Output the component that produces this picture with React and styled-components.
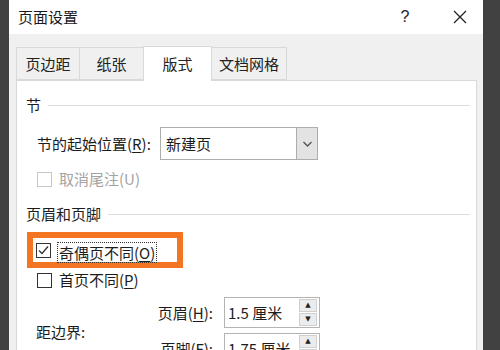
import React from 'react'
import styled, { createGlobalStyle } from 'styled-components'

const GlobalStyle = createGlobalStyle`
  html, body {
    margin: 0;
    padding: 0;
    background: #414141;
  }
  body {
    font-family: "Noto Sans CJK SC", "Noto Sans", sans-serif;
    font-size: 15px;
    line-height: 20px;
    color: #1c1c1c;
  }
`

const tabs = [
    { label: "页边距", width: 64 },
    { label: "纸张", width: 65 },
    { label: "版式", width: 69, active: true },
    { label: "文档网格", width: 76 },
]

const Check = () => (
    <svg width="13" height="13" viewBox="0 0 13 13">
        <polyline points="2,6.5 5,9.5 11,2.5" fill="none" stroke="#333" strokeWidth="1.3" />
    </svg>
)

const App = () => {
    return (
        <>
        <GlobalStyle />
        <Screen>
            <DarkEdge $w={9} />
            <Dialog>
                <TitleBar>
                    <Title>页面设置</Title>
                    <TitleButton $mr={9}>?</TitleButton>
                    <TitleButton>
                        <svg width="16" height="16" viewBox="0 0 16 16">
                            <path d="M2 2 L14 14 M14 2 L2 14" stroke="#222" strokeWidth="1.3" />
                        </svg>
                    </TitleButton>
                </TitleBar>

                <Body>
                    <TabRow>
                        {tabs.map(t => (
                            <Tab key={t.label} $w={t.width} $active={t.active}>{t.label}</Tab>
                        ))}
                    </TabRow>

                    <Panel>
                        <SectionHeader>节<Rule /></SectionHeader>

                        <SelectRow>
                            <FieldLabel $w={123}>节的起始位置(<u>R</u>):</FieldLabel>
                            <Select>
                                <SelectValue>新建页</SelectValue>
                                <DropButton>
                                    <svg width="11" height="8" viewBox="0 0 11 8">
                                        <polyline points="1.5,2 5.5,6 9.5,2" fill="none" stroke="#555" strokeWidth="1.4" />
                                    </svg>
                                </DropButton>
                            </Select>
                        </SelectRow>

                        <CheckRow $disabled $mt={9}>
                            <Box $disabled />
                            <span>取消尾注(U)</span>
                        </CheckRow>

                        <SectionHeader $mt={15}>页眉和页脚<Rule /></SectionHeader>

                        <Highlight>
                            <CheckRow $mt={0} $pl={0}>
                                <Box><Check /></Box>
                                <Focus>奇偶页不同(<u>O</u>)</Focus>
                            </CheckRow>
                        </Highlight>

                        <CheckRow $mt={2}>
                            <Box />
                            <span>首页不同(<u>P</u>)</span>
                        </CheckRow>

                        <DistanceGrid>
                            <DistanceLabel>距边界:</DistanceLabel>
                            <RightLabel>页眉(<u>H</u>):</RightLabel>
                            <SpinInput>
                                <SpinValue>1.5 厘米</SpinValue>
                                <Spinner>
                                    <SpinButton>▲</SpinButton>
                                    <SpinButton>▼</SpinButton>
                                </Spinner>
                            </SpinInput>
                            <RightLabel>页脚(<u>F</u>):</RightLabel>
                            <SpinInput>
                                <SpinValue>1.75 厘米</SpinValue>
                                <Spinner>
                                    <SpinButton>▲</SpinButton>
                                    <SpinButton>▼</SpinButton>
                                </Spinner>
                            </SpinInput>
                        </DistanceGrid>
                    </Panel>
                </Body>
            </Dialog>
            <DarkEdge $w={17} />
        </Screen>
        </>
    )
}

export default App

const Screen = styled.div`
    display: flex;
    width: 500px;
    height: 350px;
    overflow: hidden;
`

const DarkEdge = styled.div`
    width: ${p => p.$w}px;
    flex-shrink: 0;
    background: #414141;
`

const Dialog = styled.div`
    flex: 1;
    display: flex;
    flex-direction: column;
    background: #f0f0f0;
    min-width: 0;
`

const TitleBar = styled.div`
    height: 34px;
    flex-shrink: 0;
    display: flex;
    align-items: center;
    padding-left: 9px;
    background: #ffffff;
`

const Title = styled.div`
    flex: 1;
    color: #1a1a1a;
`

const TitleButton = styled.div`
    width: 46px;
    height: 34px;
    margin-right: ${p => p.$mr || 0}px;
    display: flex;
    align-items: center;
    justify-content: center;
    font-family: "Liberation Sans", sans-serif;
    font-size: 16px;
    color: #222;
`

const Body = styled.div`
    flex: 1;
    display: flex;
    flex-direction: column;
    padding: 12px 6px 0 7px;
`

const TabRow = styled.div`
    display: flex;
    align-items: flex-end;
    height: 34px;
    position: relative;
    z-index: 1;
`

const Tab = styled.div`
    width: ${p => p.$w}px;
    height: ${p => p.$active ? 35 : 33}px;
    margin-left: -1px;
    box-sizing: border-box;
    display: flex;
    align-items: center;
    justify-content: center;
    border: 1px solid #d9d9d9;
    border-bottom: ${p => p.$active ? "none" : "1px solid #d9d9d9"};
    margin-bottom: ${p => p.$active ? -1 : 0}px;
    background: ${p => p.$active ? "#ffffff" : "#f0f0f0"};
    color: #222;
    &:first-child {
        margin-left: 0;
    }
`

const Panel = styled.div`
    flex: 1;
    background: #ffffff;
    border: 1px solid #d9d9d9;
    padding: 14px 6px 0 9px;
`

const SectionHeader = styled.div`
    display: flex;
    align-items: center;
    gap: 7px;
    height: 20px;
    margin-top: ${p => p.$mt || 0}px;
    color: #1c1c1c;
`

const Rule = styled.div`
    flex: 1;
    height: 1px;
    background: #dcdcdc;
`

const SelectRow = styled.div`
    display: flex;
    align-items: center;
    margin-top: 12px;
    padding-left: 11px;
    height: 33px;
`

const FieldLabel = styled.div`
    width: ${p => p.$w}px;
    flex-shrink: 0;
    white-space: nowrap;
    u { text-underline-offset: 2px; }
`

const Select = styled.div`
    width: 158px;
    height: 33px;
    box-sizing: border-box;
    display: flex;
    border: 1px solid #adadad;
    background: #fff;
`

const SelectValue = styled.div`
    flex: 1;
    display: flex;
    align-items: center;
    padding-left: 5px;
`

const DropButton = styled.div`
    width: 20px;
    display: flex;
    align-items: center;
    justify-content: center;
    border-left: 1px solid #adadad;
    background: #e3e3e3;
`

const CheckRow = styled.div`
    display: flex;
    align-items: center;
    gap: 7px;
    height: 20px;
    margin-top: ${p => p.$mt ?? 0}px;
    padding-left: ${p => p.$pl ?? 11}px;
    color: ${p => p.$disabled ? "#a3a3a3" : "#1c1c1c"};
    white-space: nowrap;
    u { text-underline-offset: 2px; }
`

const Box = styled.div`
    width: 15px;
    height: 15px;
    box-sizing: border-box;
    flex-shrink: 0;
    display: flex;
    align-items: center;
    justify-content: center;
    border: 1px solid ${p => p.$disabled ? "#c6c6c6" : "#333333"};
    background: #fff;
`

const Highlight = styled.div`
    width: 156px;
    height: 36px;
    box-sizing: border-box;
    margin-top: 8px;
    margin-left: 1px;
    padding-left: 3px;
    display: flex;
    align-items: center;
    border: 6px solid #f37521;
`

const Focus = styled.div`
    margin-left: -1px;
    padding: 0 1px;
    height: 19px;
    line-height: 19px;
    margin-top: 4px;
    border: 1px dotted #333;
    white-space: nowrap;
`

const DistanceGrid = styled.div`
    display: grid;
    grid-template-columns: 120px 56px 96px;
    grid-template-rows: 31px 31px;
    column-gap: 11px;
    row-gap: 5px;
    margin-top: 7px;
    align-items: center;
`

const DistanceLabel = styled.div`
    grid-row: 1 / span 2;
    padding-left: 10px;
    padding-top: 2px;
`

const RightLabel = styled.div`
    text-align: right;
    white-space: nowrap;
    u { text-underline-offset: 2px; }
`

const SpinInput = styled.div`
    height: 31px;
    box-sizing: border-box;
    display: flex;
    align-items: center;
    border: 1px solid #b4b4b4;
    background: #fff;
    padding-right: 2px;
`

const SpinValue = styled.div`
    flex: 1;
    padding-left: 3px;
    white-space: nowrap;
`

const Spinner = styled.div`
    display: flex;
    flex-direction: column;
    gap: 1px;
`

const SpinButton = styled.div`
    width: 18px;
    height: 13px;
    box-sizing: border-box;
    display: flex;
    align-items: center;
    justify-content: center;
    border: 1px solid #cfcfcf;
    background: #ececec;
    font-family: "DejaVu Sans", sans-serif;
    font-size: 7px;
    line-height: 1;
    color: #222;
`
